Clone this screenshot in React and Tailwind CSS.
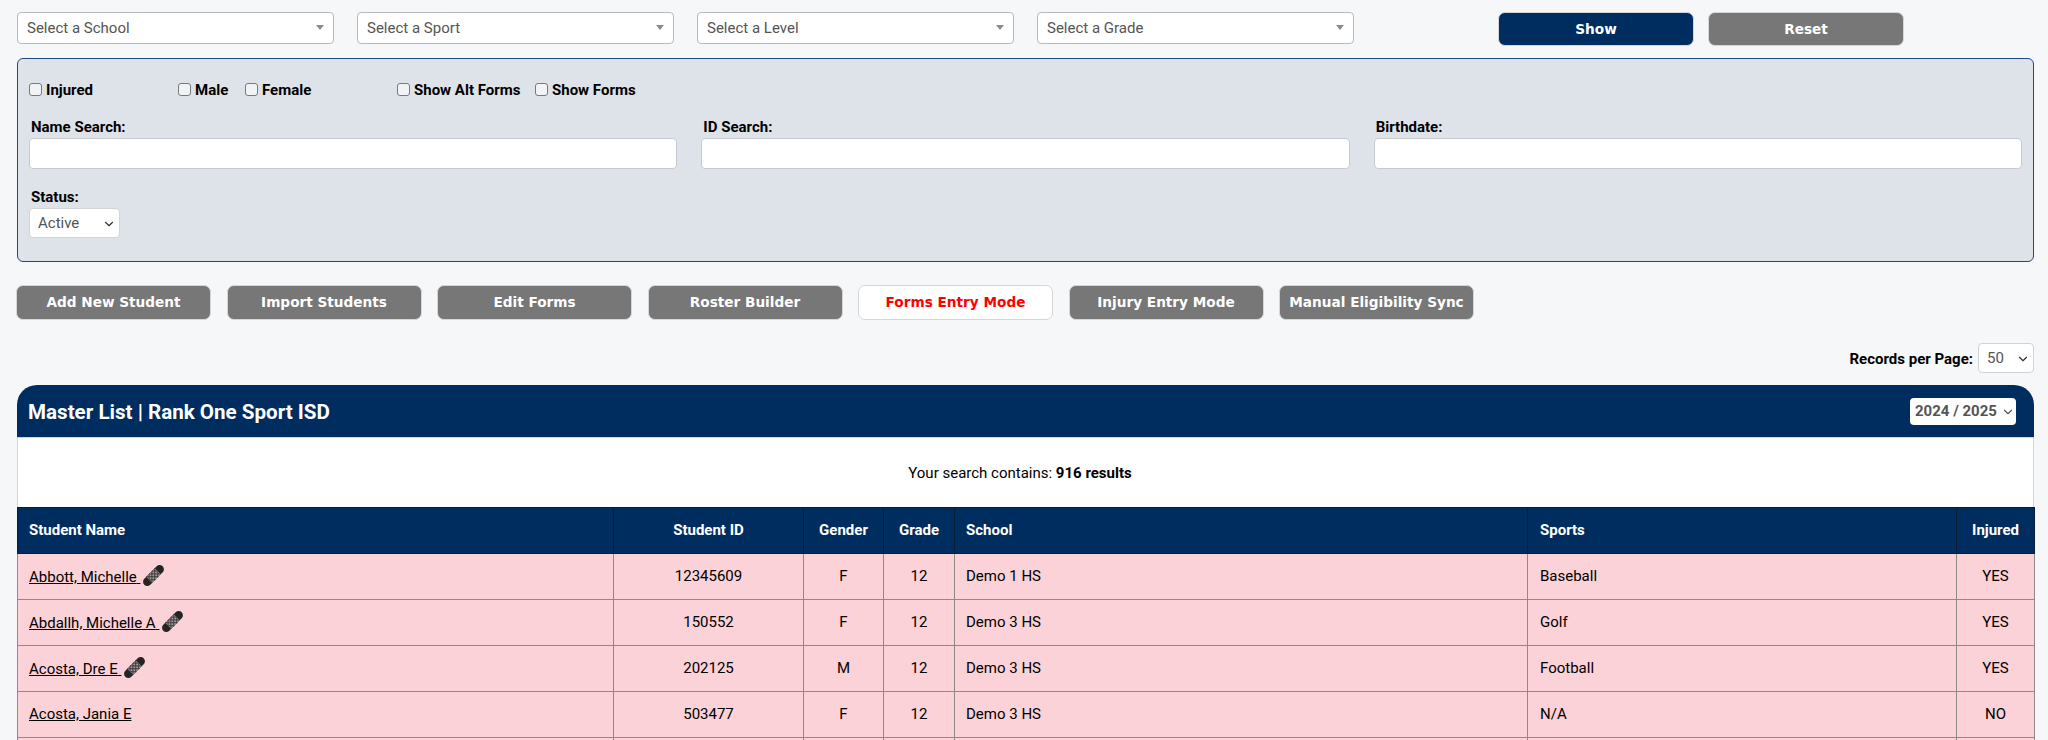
import React from 'react';
import { ChevronDown } from 'lucide-react';

const topSelects = ['Select a School', 'Select a Sport', 'Select a Level', 'Select a Grade'];
const actions = ['Add New Student', 'Import Students', 'Edit Forms', 'Roster Builder', 'Forms Entry Mode', 'Injury Entry Mode', 'Manual Eligibility Sync'];
const students = [
    { name: 'Abbott, Michelle', id: '12345609', gender: 'F', school: 'Demo 1 HS', sports: 'Baseball', injured: 'YES' },
    { name: 'Abdallh, Michelle A', id: '150552', gender: 'F', school: 'Demo 3 HS', sports: 'Golf', injured: 'YES' },
    { name: 'Acosta, Dre E', id: '202125', gender: 'M', school: 'Demo 3 HS', sports: 'Football', injured: 'YES' },
    { name: 'Acosta, Jania E', id: '503477', gender: 'F', school: 'Demo 3 HS', sports: 'N/A', injured: 'NO' },
];

function BandAid() {
    return (
        <svg width="21" height="21" viewBox="0 0 21 21" className="inline-block ml-[3px] align-[-4px]">
            <g transform="rotate(-45 10.5 10.5)">
                <rect x="-2.5" y="6.25" width="26" height="8.5" rx="4.25" fill="#262324" />
                <rect x="4.5" y="6.25" width="12" height="8.5" fill="#a39b9d" />
                <path d="M4.5 6.25l8.5 8.5M8.5 6.25l8 8M4.5 10.5l4.25 4.25M12.5 6.25l4 4M16.5 6.25l-8.5 8.5M12.5 6.25l-8 8M16.5 10.5l-4.25 4.25M8.5 6.25l-4 4" stroke="#3a3537" strokeWidth="0.9" />
            </g>
        </svg>
    );
}

function Check({ label, className }) {
    return (
        <label className={`flex items-center font-bold text-[15px] text-black ${className}`}>
            <input type="checkbox" className="appearance-none w-[13px] h-[13px] mr-[4px] -mt-[2px] bg-[#f2f3f5] border border-[#77797d] rounded-[3px]" />
            {label}
        </label>
    );
}

function Field({ label }) {
    return (
        <div>
            <div className="pl-[2px] h-[20px] font-bold text-[15px] leading-[18px] text-black">{label}</div>
            <input type="text" className="block w-full h-[31px] bg-white border border-[#c8c9cc] rounded-[4px]" />
        </div>
    );
}

function App() {
    return (
        <div className="h-screen overflow-hidden bg-[#f6f7f9] pt-3 pl-[17px] pr-[14px] font-['Roboto',sans-serif]">
            <div className="flex items-start mb-3">
                <div className="flex gap-[23px]">
                    {topSelects.map((s) => (
                        <div key={s} className="relative flex items-center w-[317px] h-[32px] pl-[9px] bg-white border border-[#b9babc] rounded-[4px] text-[15px] text-[#555]">
                            {s}
                            <span className="absolute right-[9px] top-[12px] border-x-[4px] border-t-[5px] border-x-transparent border-t-[#8b8b8b]" />
                        </div>
                    ))}
                </div>
                <div className="flex gap-[14px] ml-[144px] font-['DejaVu_Sans',sans-serif] font-bold text-[13.65px] text-white">
                    <button className="w-[196px] h-[34px] bg-[#002d5f] border border-[#d5d6d9] rounded-[7px]">Show</button>
                    <button className="w-[196px] h-[34px] bg-[#777777] border border-[#d5d6d9] rounded-[7px]">Reset</button>
                </div>
            </div>

            <div className="h-[204px] bg-[#dee2e9] border border-[#1d4a80] rounded-[6px] pt-[21px] px-[11px]">
                <div className="flex h-[20px] mb-[18px]">
                    <Check label="Injured" className="w-[149px]" />
                    <Check label="Male" className="w-[67px]" />
                    <Check label="Female" className="w-[152px]" />
                    <Check label="Show Alt Forms" className="w-[138px]" />
                    <Check label="Show Forms" />
                </div>
                <div className="grid grid-cols-3 gap-6 mb-[19px]">
                    <Field label="Name Search:" />
                    <Field label="ID Search:" />
                    <Field label="Birthdate:" />
                </div>
                <div className="pl-[2px] h-[20px] font-bold text-[15px] leading-[18px] text-black">Status:</div>
                <div className="relative flex items-center w-[91px] h-[30px] pl-[8px] bg-white border border-[#d2d3d6] rounded-[4px] text-[15px] text-[#555]">
                    Active
                    <ChevronDown size={14} strokeWidth={2} className="absolute right-[3px] top-[8px] text-[#333]" />
                </div>
            </div>

            <div className="flex gap-[15.5px] -ml-[1px] mt-[23px] font-['DejaVu_Sans',sans-serif] font-bold text-[13.65px]">
                {actions.map((a) => (
                    <button
                        key={a}
                        className={a === 'Forms Entry Mode'
                            ? 'w-[195px] h-[35px] bg-white text-[#ff0000] border border-[#d5d6d9] rounded-[7px] whitespace-nowrap'
                            : 'w-[195px] h-[35px] bg-[#777777] text-white border border-[#d5d6d9] rounded-[7px] whitespace-nowrap'}
                    >
                        {a}
                    </button>
                ))}
            </div>

            <div className="flex justify-end items-center gap-[5px] mt-[23px] mb-[12px] font-bold text-[15px] text-black">
                <span className="mt-[2px]">Records per Page:</span>
                <div className="relative flex items-center w-[56px] h-[30px] pl-[8px] bg-white border border-[#d2d3d6] rounded-[4px] font-normal text-[#555]">
                    50
                    <ChevronDown size={14} strokeWidth={2} className="absolute right-[3px] top-[8px] text-[#333]" />
                </div>
            </div>

            <div className="flex items-center justify-between h-[52px] pl-[11px] pr-[18px] bg-[#002d5f] rounded-t-[20px]">
                <span className="mt-[3px] font-bold text-[20.6px] text-white">Master List | Rank One Sport ISD</span>
                <div className="relative flex items-center w-[106px] h-[27px] pl-[5px] bg-white rounded-[4px] font-bold text-[15px] text-[#555]">
                    2024 / 2025
                    <ChevronDown size={14} strokeWidth={2} className="absolute right-[1px] top-[7px] text-[#555]" />
                </div>
            </div>

            <div className="flex items-center justify-center h-[70px] pr-[11px] bg-white border-x border-t border-[#d4d5d8] text-[15px] text-black">
                <span className="mt-[1px]">Your search contains: <b>916 results</b></span>
            </div>

            <table className="w-[2017px] table-fixed border-collapse text-[15px] text-black">
                <colgroup>
                    <col className="w-[596px]" />
                    <col className="w-[190px]" />
                    <col className="w-[80px]" />
                    <col className="w-[71px]" />
                    <col className="w-[573px]" />
                    <col className="w-[429px]" />
                    <col className="w-[78px]" />
                </colgroup>
                <thead>
                    <tr className="h-[46px] bg-[#002d5f] text-white font-bold">
                        <th className="pl-[11px] text-left border border-[#0b1d33]">Student Name</th>
                        <th className="border border-[#0b1d33]">Student ID</th>
                        <th className="border border-[#0b1d33]">Gender</th>
                        <th className="border border-[#0b1d33]">Grade</th>
                        <th className="pl-[11px] text-left border border-[#0b1d33]">School</th>
                        <th className="pl-[12px] text-left border border-[#0b1d33]">Sports</th>
                        <th className="border border-[#0b1d33]">Injured</th>
                    </tr>
                </thead>
                <tbody>
                    {students.map((s) => (
                        <tr key={s.name} className="h-[46px] bg-[#fbd2d7]">
                            <td className="pl-[11px] border border-[#8c8a8b]">
                                <a href="#" className="underline">{s.name} </a>
                                {s.injured === 'YES' && <BandAid />}
                            </td>
                            <td className="text-center border border-[#8c8a8b]">{s.id}</td>
                            <td className="text-center border border-[#8c8a8b]">{s.gender}</td>
                            <td className="text-center border border-[#8c8a8b]">12</td>
                            <td className="pl-[11px] border border-[#8c8a8b]">{s.school}</td>
                            <td className="pl-[12px] border border-[#8c8a8b]">{s.sports}</td>
                            <td className="text-center border border-[#8c8a8b]">{s.injured}</td>
                        </tr>
                    ))}
                    <tr className="h-[46px] bg-[#fbd2d7]">
                        <td className="border border-[#8c8a8b]" />
                        <td className="border border-[#8c8a8b]" />
                        <td className="border border-[#8c8a8b]" />
                        <td className="border border-[#8c8a8b]" />
                        <td className="border border-[#8c8a8b]" />
                        <td className="border border-[#8c8a8b]" />
                        <td className="border border-[#8c8a8b]" />
                    </tr>
                </tbody>
            </table>
        </div>
    );
}

export default App;
